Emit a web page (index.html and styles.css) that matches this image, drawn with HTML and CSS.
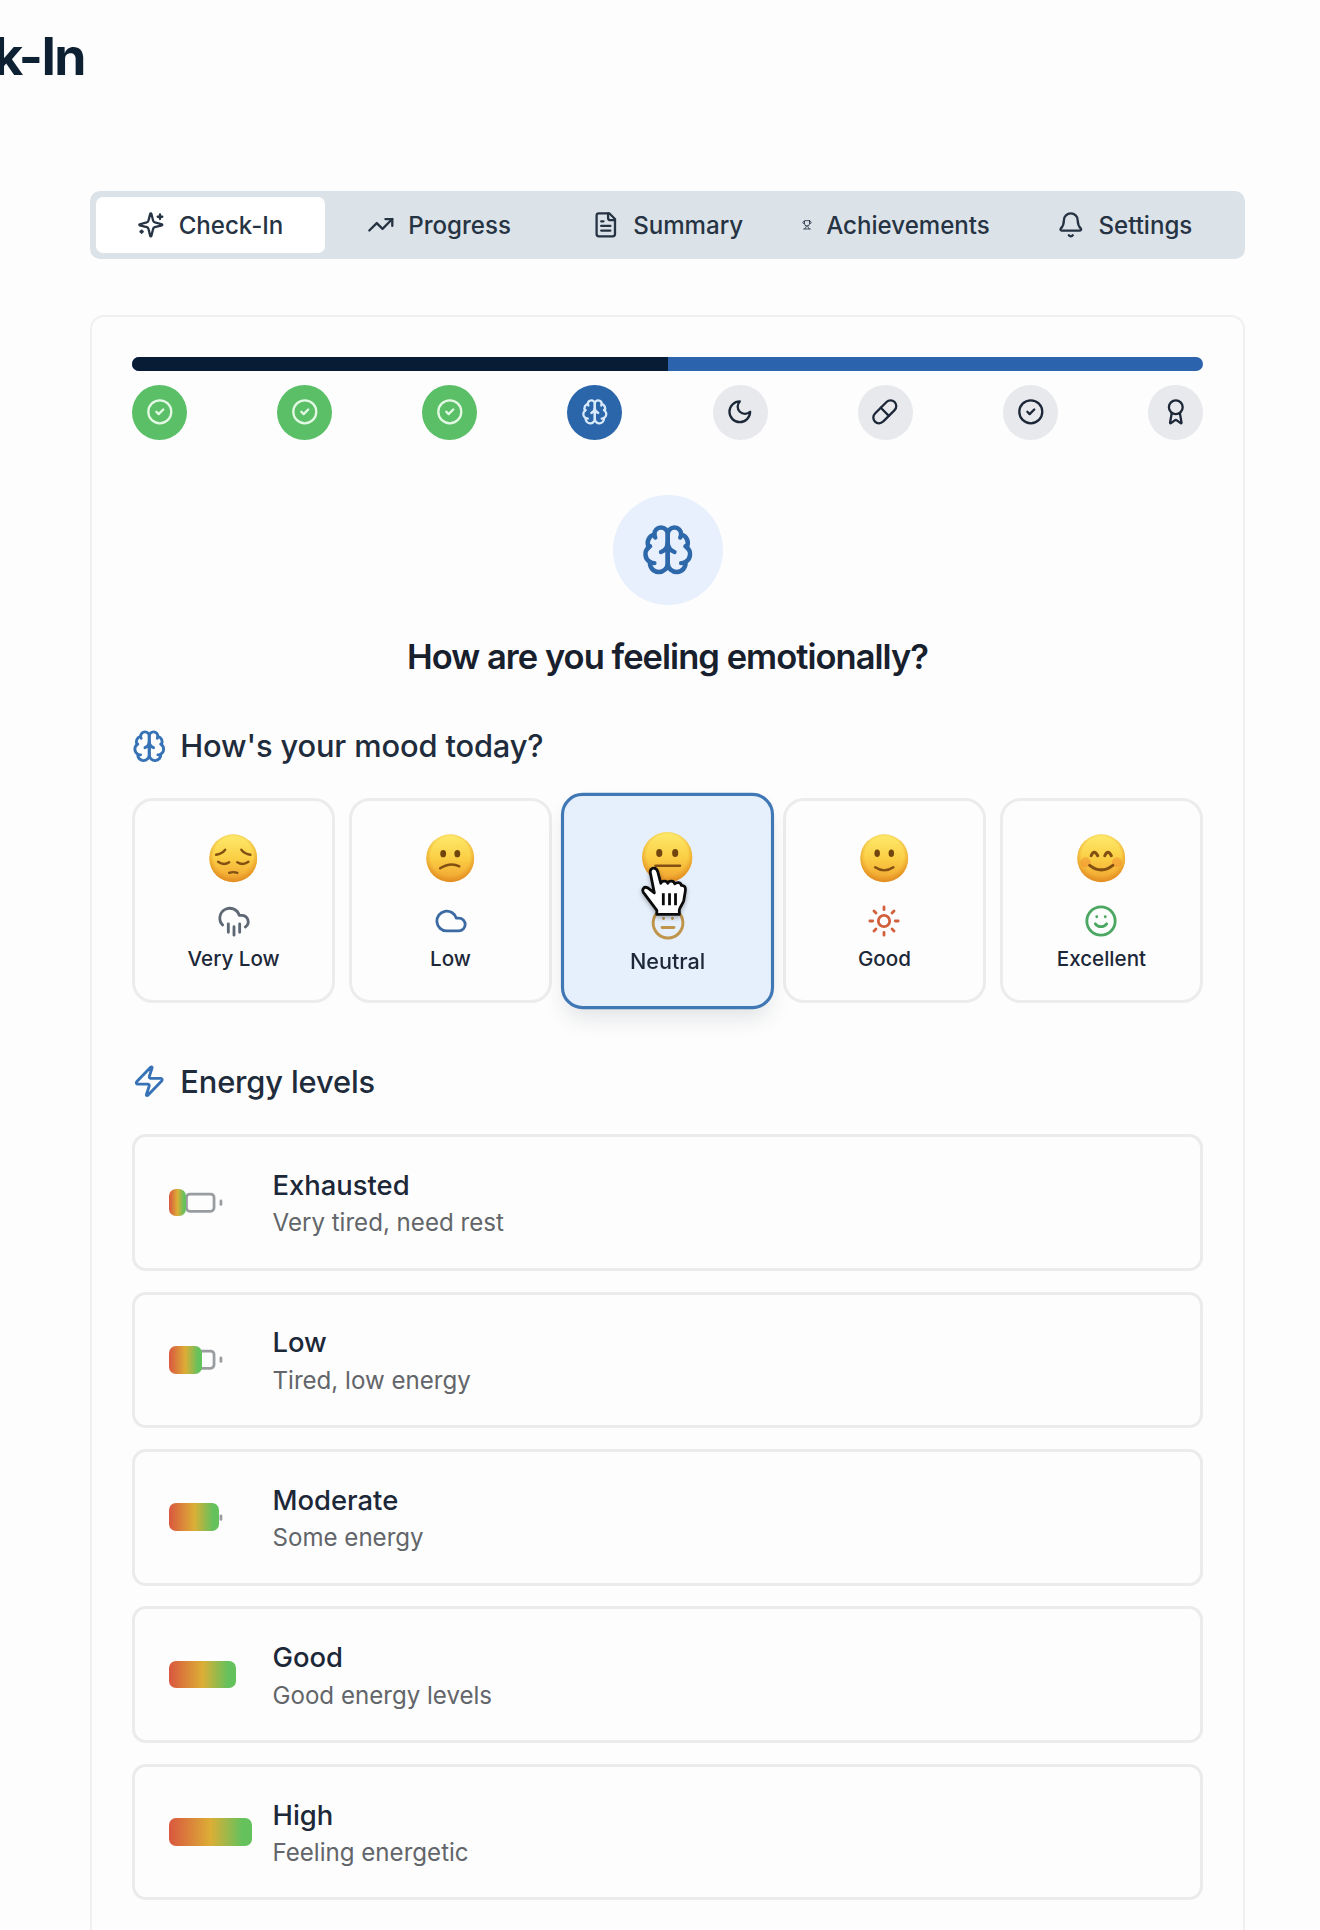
FILE: index.html
```html
<!DOCTYPE html>
<html lang="en">
<head>
<meta charset="utf-8">
<title>Check-In</title>
<link rel="stylesheet" href="styles.css">
</head>
<body>
<svg class="defs" aria-hidden="true">
  <defs>
    <linearGradient id="face-fill" x1="0" y1="0" x2="0" y2="1">
      <stop offset="0" stop-color="#fdea6c"/><stop offset=".5" stop-color="#fbcf45"/><stop offset="1" stop-color="#f0a02f"/>
    </linearGradient>
    <radialGradient id="face-edge" cx=".5" cy=".45" r=".56">
      <stop offset=".72" stop-color="#e08a1c" stop-opacity="0"/><stop offset="1" stop-color="#d98218" stop-opacity=".75"/>
    </radialGradient>
    <symbol id="face" viewBox="0 0 48 48"><circle cx="24" cy="24" r="23.7" fill="url(#face-fill)"/><circle cx="24" cy="24" r="23.7" fill="url(#face-edge)"/></symbol>
    <symbol id="brain" viewBox="0 0 24 24"><path d="M12 5a3 3 0 1 0-5.997.125 4 4 0 0 0-2.526 5.77 4 4 0 0 0 .556 6.588A4 4 0 1 0 12 18Z"/><path d="M12 5a3 3 0 1 1 5.997.125 4 4 0 0 1 2.526 5.77 4 4 0 0 1-.556 6.588A4 4 0 1 1 12 18Z"/><path d="M15 13a4.5 4.5 0 0 1-3-4 4.5 4.5 0 0 1-3 4"/><path d="M17.599 6.5a3 3 0 0 0 .399-1.375"/><path d="M6.003 5.125A3 3 0 0 0 6.401 6.5"/><path d="M3.477 10.896a4 4 0 0 1 .585-.396"/><path d="M19.938 10.5a4 4 0 0 1 .585.396"/><path d="M6 18a4 4 0 0 1-1.967-.516"/><path d="M19.967 17.484A4 4 0 0 1 18 18"/></symbol>
    <symbol id="check" viewBox="0 0 24 24"><circle cx="12" cy="12" r="10"/><path d="m9 12 2 2 4-4"/></symbol>
    <symbol id="battery" viewBox="0 0 24 24"><rect x="2" y="7" width="16" height="10" rx="2"/><path d="M22 11v2"/></symbol>
  </defs>
</svg>

<div class="page">
  <header class="header"><h1 class="title">k-In</h1></header>

  <nav class="tabs">
    <button class="tab active"><svg class="icon" viewBox="0 0 24 24"><path d="M9.937 15.5A2 2 0 0 0 8.5 14.063l-6.135-1.582a.5.5 0 0 1 0-.962L8.5 9.936A2 2 0 0 0 9.937 8.5l1.582-6.135a.5.5 0 0 1 .963 0L14.063 8.5A2 2 0 0 0 15.5 9.937l6.135 1.581a.5.5 0 0 1 0 .964L15.5 14.063a2 2 0 0 0-1.437 1.437l-1.582 6.135a.5.5 0 0 1-.963 0z"/><path d="M20 3v4M22 5h-4M4 17v2M5 18H3"/></svg><span>Check-In</span></button>
    <button class="tab"><svg class="icon" viewBox="0 0 24 24"><path d="M22 7l-8.5 8.5-5-5L2 17"/><path d="M16 7h6v6"/></svg><span>Progress</span></button>
    <button class="tab"><svg class="icon" viewBox="0 0 24 24"><path d="M15 2H6a2 2 0 0 0-2 2v16a2 2 0 0 0 2 2h12a2 2 0 0 0 2-2V7Z"/><path d="M14 2v4a2 2 0 0 0 2 2h4M10 9H8M16 13H8M16 17H8"/></svg><span>Summary</span></button>
    <button class="tab"><svg class="icon squeezed" viewBox="0 0 24 24"><path d="M6 9H4.500a2.500 2.500 0 0 1 0-5H6M18 9h1.500a2.500 2.500 0 0 0 0-5H18M4 22h16"/><path d="M10 14.660V17c0 .55-.47.98-.97 1.210C7.850 18.750 7 20.240 7 22M14 14.660V17c0 .55.47.98.97 1.210C16.150 18.750 17 20.240 17 22"/><path d="M18 2H6v7a6 6 0 0 0 12 0V2Z"/></svg><span>Achievements</span></button>
    <button class="tab"><svg class="icon" viewBox="0 0 24 24"><path d="M10.268 21a2 2 0 0 0 3.464 0"/><path d="M3.262 15.326A1 1 0 0 0 4 17h16a1 1 0 0 0 .74-1.673C19.410 13.956 18 12.499 18 8A6 6 0 0 0 6 8c0 4.499-1.411 5.956-2.738 7.326"/></svg><span>Settings</span></button>
  </nav>

  <main class="card">
    <div class="progress"><div class="progress-fill" style="width:50%"></div></div>
    <div class="steps">
      <div class="step done"><svg class="icon"><use href="#check"/></svg></div>
      <div class="step done"><svg class="icon"><use href="#check"/></svg></div>
      <div class="step done"><svg class="icon"><use href="#check"/></svg></div>
      <div class="step current"><svg class="icon"><use href="#brain"/></svg></div>
      <div class="step"><svg class="icon" viewBox="0 0 24 24"><path d="M12 3a6 6 0 0 0 9 9 9 9 0 1 1-9-9Z"/></svg></div>
      <div class="step"><svg class="icon" viewBox="0 0 24 24"><path d="m10.500 20.500 10-10a4.950 4.950 0 1 0-7-7l-10 10a4.950 4.950 0 1 0 7 7Z"/><path d="m8.500 8.500 7 7"/></svg></div>
      <div class="step"><svg class="icon"><use href="#check"/></svg></div>
      <div class="step"><svg class="icon" viewBox="0 0 24 24"><path d="m15.477 12.890 1.515 8.526a.5.5 0 0 1-.81.47l-3.580-2.687a1 1 0 0 0-1.197 0l-3.586 2.686a.5.5 0 0 1-.81-.469l1.514-8.526"/><circle cx="12" cy="8" r="6"/></svg></div>
    </div>

    <div class="hero"><svg class="icon"><use href="#brain"/></svg></div>
    <h2 class="question">How are you feeling emotionally?</h2>

    <h3 class="label"><svg class="icon"><use href="#brain"/></svg><span>How's your mood today?</span></h3>
    <div class="moods">
      <button class="mood">
        <svg class="emoji" viewBox="0 0 48 48"><use href="#face"/><g class="features"><path d="M7 20.500q6-1 9-5M41 20.500q-6-1-9-5"/><path d="M9 27.500q5.500 4 11 .5M39 27.500q-5.500 4-11 .5"/><path d="M20 38.500q4-1.500 8 0"/></g></svg>
        <svg class="icon rain" viewBox="0 0 24 24"><path d="M4 14.899A7 7 0 1 1 15.710 8h1.790a4.500 4.500 0 0 1 2.500 8.242M16 14v6M8 14v6M12 16v6"/></svg>
        <span>Very Low</span>
      </button>
      <button class="mood">
        <svg class="emoji" viewBox="0 0 48 48"><use href="#face"/><g class="features"><path d="M14 34q10-6.500 19-2"/></g><g class="eyes"><ellipse cx="17" cy="19.500" rx="2.900" ry="3.600"/><ellipse cx="31" cy="19.500" rx="2.900" ry="3.600"/></g></svg>
        <svg class="icon cloud" viewBox="0 0 24 24"><path d="M17.500 19H9a7 7 0 1 1 6.710-9h1.790a4.500 4.500 0 1 1 0 9Z"/></svg>
        <span>Low</span>
      </button>
      <button class="mood selected">
        <svg class="emoji" viewBox="0 0 48 48"><use href="#face"/><g class="features"><path d="M13 32h23"/></g><g class="eyes"><ellipse cx="16.500" cy="20" rx="2.900" ry="3.800"/><ellipse cx="31.500" cy="20" rx="2.900" ry="3.800"/></g></svg>
        <svg class="icon meh" viewBox="0 0 24 24"><circle cx="12" cy="12" r="10"/><path d="M8 15h8M9 9h.01M15 9h.01"/></svg>
        <span>Neutral</span>
        <svg class="cursor" viewBox="0 0 46 52"><path d="M9.500 6.500C8.500 1 15.500 0 17 5.500l3 11.500c1-3 6-3 7 0 1-3 6-3 7 .5 2-2 6-1.500 6.500 1.500 4 0 4.500 3 4 6l-1.500 9c-.8 4-4.500 7-4.500 10v4H16v-4L4 28c-4-4-1.500-8.500 3-6.500l6.500 5Z"/><path d="M22.500 27v12M28.700 27v12M34.700 27v12"/></svg>
      </button>
      <button class="mood">
        <svg class="emoji" viewBox="0 0 48 48"><use href="#face"/><g class="features"><path d="M15 33q9 6 18 0"/></g><g class="eyes"><ellipse cx="17" cy="19" rx="2.700" ry="3.700"/><ellipse cx="31" cy="19" rx="2.700" ry="3.700"/></g></svg>
        <svg class="icon sun" viewBox="0 0 24 24"><circle cx="12" cy="12" r="4"/><path d="M12 2v2M12 20v2M4.930 4.930l1.410 1.410M17.660 17.660l1.410 1.410M2 12h2M20 12h2M6.340 17.660l-1.410 1.410M19.070 4.930l-1.410 1.410"/></svg>
        <span>Good</span>
      </button>
      <button class="mood">
        <svg class="emoji" viewBox="0 0 48 48"><use href="#face"/><g class="blush"><circle cx="8.500" cy="28" r="5"/><circle cx="39.500" cy="28" r="5"/></g><g class="features bold"><path d="M14 21.500q3-7 6.500 0M27.500 21.500q3-7 6.500 0"/><path d="M12.500 31q11.500 9 23 0"/></g></svg>
        <svg class="icon smile" viewBox="0 0 24 24"><circle cx="12" cy="12" r="10"/><path d="M8 14s1.500 2 4 2 4-2 4-2M9 9h.01M15 9h.01"/></svg>
        <span>Excellent</span>
      </button>
    </div>

    <h3 class="label energy-label"><svg class="icon" viewBox="0 0 24 24"><path d="M4 14a1 1 0 0 1-.78-1.630l9.900-10.200a.5.5 0 0 1 .86.46l-1.920 6.020A1 1 0 0 0 13 10h7a1 1 0 0 1 .78 1.630l-9.900 10.200a.5.5 0 0 1-.86-.46l1.920-6.020A1 1 0 0 0 11 14z"/></svg><span>Energy levels</span></h3>
    <div class="levels">
      <button class="level"><span class="gauge"><svg class="icon"><use href="#battery"/></svg><i class="charge" style="width:24%"></i></span><span class="text"><b>Exhausted</b><small>Very tired, need rest</small></span></button>
      <button class="level"><span class="gauge"><svg class="icon"><use href="#battery"/></svg><i class="charge" style="width:47%"></i></span><span class="text"><b>Low</b><small>Tired, low energy</small></span></button>
      <button class="level"><span class="gauge"><svg class="icon"><use href="#battery"/></svg><i class="charge" style="width:72%"></i></span><span class="text"><b>Moderate</b><small>Some energy</small></span></button>
      <button class="level"><span class="gauge"><svg class="icon"><use href="#battery"/></svg><i class="charge" style="width:95.500%"></i></span><span class="text"><b>Good</b><small>Good energy levels</small></span></button>
      <button class="level"><span class="gauge"><svg class="icon"><use href="#battery"/></svg><i class="charge" style="width:119%"></i></span><span class="text"><b>High</b><small>Feeling energetic</small></span></button>
    </div>
  </main>
</div>
</body>
</html>
```
FILE: styles.css
```css
* { box-sizing: border-box; }
body { margin: 0; background: #fdfdfd; color: #1c2738; font-family: Inter, "Liberation Sans", sans-serif; }
button { margin: 0; padding: 0; border: 0; background: none; color: inherit; font: inherit; text-align: left; }
h1, h2, h3 { margin: 0; }
.defs { position: absolute; width: 0; height: 0; }
.page { height: 1930px; overflow: hidden; }
.icon { width: 27.6px; height: 27.6px; flex: none; fill: none; stroke: currentColor; stroke-width: 2; stroke-linecap: round; stroke-linejoin: round; }

.header { display: flex; justify-content: flex-end; width: 85px; height: 191px; padding-top: 25px; }
.title { font-size: 51.7px; line-height: 62px; font-weight: 700; letter-spacing: -.03em; color: #0e2133; white-space: nowrap; }

.tabs { display: grid; grid-template-columns: repeat(5, 1fr); width: 1155px; height: 68px; margin-left: 90px; padding: 6px; border-radius: 10px; background: #dbe2e8; }
.tab { display: flex; align-items: center; justify-content: center; gap: 13.8px; min-width: 0; border-radius: 7px; font-size: 24.1px; font-weight: 530; color: #263343; }
.tab.active { background: #fff; }
.squeezed { width: 10px; }

.card { width: 1155px; height: 1750px; margin: 56px 0 0 90px; padding: 40px 40px 0; border: 2px solid #f0f0f1; border-radius: 14px; }
.progress { height: 14px; border-radius: 7px; overflow: hidden; background: #2c63ad; }
.progress-fill { height: 100%; background: #081c35; }
.steps { display: flex; justify-content: space-between; margin-top: 13.6px; }
.step { display: flex; align-items: center; justify-content: center; width: 55px; height: 55px; border-radius: 50%; background: #e7e9ec; }
.step.done { background: #5bbf67; color: #e3f9e4; }
.step.current { background: #2b66ab; color: #d9ebfb; }

.hero { display: flex; align-items: center; justify-content: center; width: 110px; height: 110px; margin: 55.5px auto 0; border-radius: 50%; background: #e8f0fd; color: #2d68aa; }
.hero .icon { width: 53.5px; height: 53.5px; }
.question { margin-top: 28.2px; font-size: 34.5px; line-height: 48px; font-weight: 600; letter-spacing: -.028em; text-align: center; color: #17202c; }

.label { display: flex; align-items: center; gap: 13.8px; height: 36px; margin-top: 47px; font-size: 30.8px; line-height: 36px; font-weight: 530; letter-spacing: -.004em; color: #202b3b; }
.label .icon { width: 34.5px; height: 34.5px; color: #3672b5; }
.energy-label { margin-top: 60.5px; }

.moods { display: grid; grid-template-columns: repeat(5, 1fr); gap: 13.8px; margin-top: 33.3px; }
.mood { position: relative; display: flex; flex-direction: column; align-items: center; height: 205.6px; padding-top: 33.5px; border: 3px solid #ececed; border-radius: 20.7px; font-size: 20.6px; line-height: 27.6px; font-weight: 540; }
.mood.selected { z-index: 1; transform: scale(1.05); border-color: #4077b5; background: #e6f0fc; box-shadow: 0 12px 20px -4px rgba(40, 55, 70, .13); }
.emoji { width: 48.5px; height: 48.5px; flex: none; }
.mood .icon { width: 34px; height: 34px; margin: 21.6px 0 6.600px; }
.features { fill: none; stroke: #825012; stroke-width: 2.4; stroke-linecap: round; }
.features.bold { stroke-width: 3; }
.eyes { fill: #70450e; }
.blush { fill: #ee7f2e; opacity: .4; }
.rain { color: #5e6875; }
.cloud { color: #3c6ba4; }
.meh { color: #bf954c; }
.sun { color: #d3603c; }
.smile { color: #4ba762; }
.cursor { position: absolute; left: 73px; top: 67px; width: 44px; height: 49.5px; fill: #fff; stroke: #0b0b0b; stroke-width: 2.8; stroke-linejoin: round; filter: drop-shadow(0 2px 2px rgba(0, 0, 0, .3)); }

.levels { display: grid; gap: 20.7px; margin-top: 34.5px; }
.level { display: flex; align-items: center; height: 136.7px; padding: 0 34px; border: 3px solid #ebebec; border-radius: 14px; }
.gauge { position: relative; display: flex; align-items: center; justify-content: center; width: 70px; height: 41.4px; color: #9a9d9f; }
.gauge .icon { width: 41.4px; height: 41.4px; stroke-width: 1.6; }
.charge { position: absolute; left: 0; top: 6.900px; height: 27.6px; border-radius: 7px; background: linear-gradient(90deg, #d9573f, #dcae36 50%, #65c15c 88%); }
.text { display: flex; flex-direction: column; margin-left: 33.5px; padding-top: 1px; }
.text b { font-size: 27.4px; line-height: 41.4px; font-weight: 530; }
.text small { font-size: 24.1px; line-height: 34.5px; color: #626569; }
```
